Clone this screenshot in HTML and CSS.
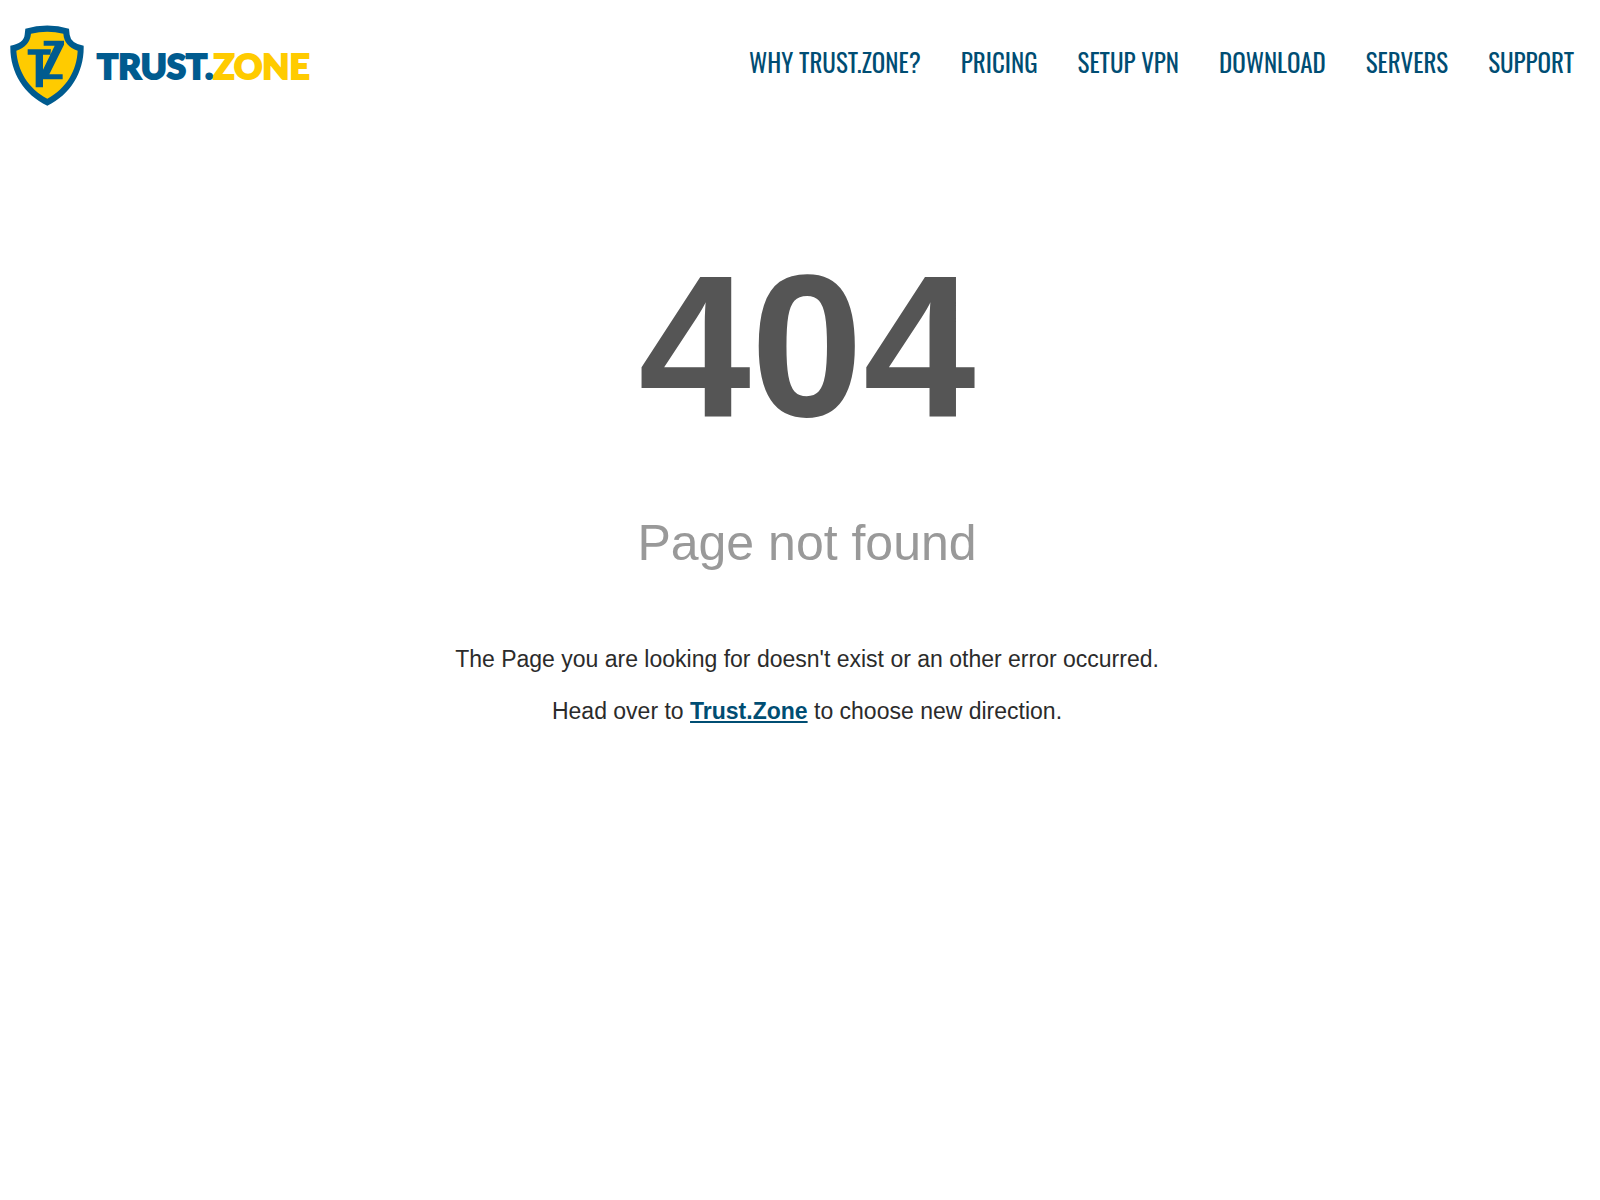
FILE: index.html
```html
<!DOCTYPE html>
<html lang="en">
  <head>
    <meta charset="UTF-8" />
    <meta name="viewport" content="width=device-width, initial-scale=1.0" />
    <title>404 - Trust.Zone</title>
    <link rel="stylesheet" href="styles.css">
  </head>
  <body>
    <header class="header">
      <a class="logo" href="/">
        <svg class="shield" viewBox="31 44 222 243" aria-hidden="true">
          <path fill="#005b8f" d="M77 55Q143 36 208 55L210 73Q213 99 252 106C254 183 214 252 143 286C71 252 30 183 32 106Q73 98 75 73Z" />
          <path fill="#ffcb00" d="M94 70Q143 59 191 70Q194 108 234 121C231 181 200 234 143 265C85 234 54 181 50 121Q90 108 94 70Z" />
          <path fill="#005b8f" d="M84 117H154L152 133H130V231H108V133H84ZM132 91H193V103L149 192H189V207H130V178L165 106H132Z" />
        </svg>
        <span class="logo-text">TRUST.<span class="zone">ZONE</span></span>
      </a>
      <nav class="menu">
        <a href="/why">WHY TRUST.ZONE?</a>
        <a href="/prices">PRICING</a>
        <a href="/setup">SETUP VPN</a>
        <a href="/download">DOWNLOAD</a>
        <a href="/servers">SERVERS</a>
        <a href="/support">SUPPORT</a>
      </nav>
    </header>

    <main class="error">
      <h1>404</h1>
      <h2>Page not found</h2>
      <p>The Page you are looking for doesn't exist or an other error occurred.</p>
      <p>Head over to <a href="/">Trust.Zone</a> to choose new direction.</p>
    </main>
  </body>
</html>
```

FILE: styles.css
```css
* {
  box-sizing: border-box;
}
body {
  margin: 0;
  background-color: #fff;
  color: #2b2b2b;
  font-family: Arial, "Liberation Sans", sans-serif;
  font-size: 23px;
}
a {
  color: #004d73;
}

.header {
  display: flex;
  flex-wrap: wrap;
  align-items: center;
  justify-content: space-between;
  gap: 20px;
  padding: 25px 26px 25px 10px;
}
.logo {
  display: flex;
  align-items: center;
  gap: 13px;
  text-decoration: none;
}
.shield {
  width: 74px;
  height: 81px;
}
.logo-text {
  padding-bottom: 2px;
  color: #005b8f;
  font-family: Lato, sans-serif;
  font-size: 35px;
  font-weight: 900;
  line-height: 40px;
  -webkit-text-stroke: 2px;
}
.zone {
  color: #ffcb00;
}

.menu {
  display: flex;
  flex-wrap: wrap;
  gap: 16px 40px;
  padding-bottom: 8px;
}
.menu a {
  font-family: Oswald, "Roboto Condensed", "Liberation Sans Narrow", sans-serif;
  font-size: 25px;
  line-height: 36px;
  text-decoration: none;
}

.error {
  padding: 80px 0 40px 14px;
  text-align: center;
}
.error h1 {
  margin: 0;
  color: #555;
  font-size: 202px;
  line-height: 270px;
}
.error h2 {
  margin: 32px 0 72px;
  color: #999;
  font-size: 50px;
  font-weight: normal;
  line-height: 60px;
}
.error p {
  margin: 0 0 24px;
  line-height: 28px;
}
.error p a {
  font-weight: bold;
}
```
